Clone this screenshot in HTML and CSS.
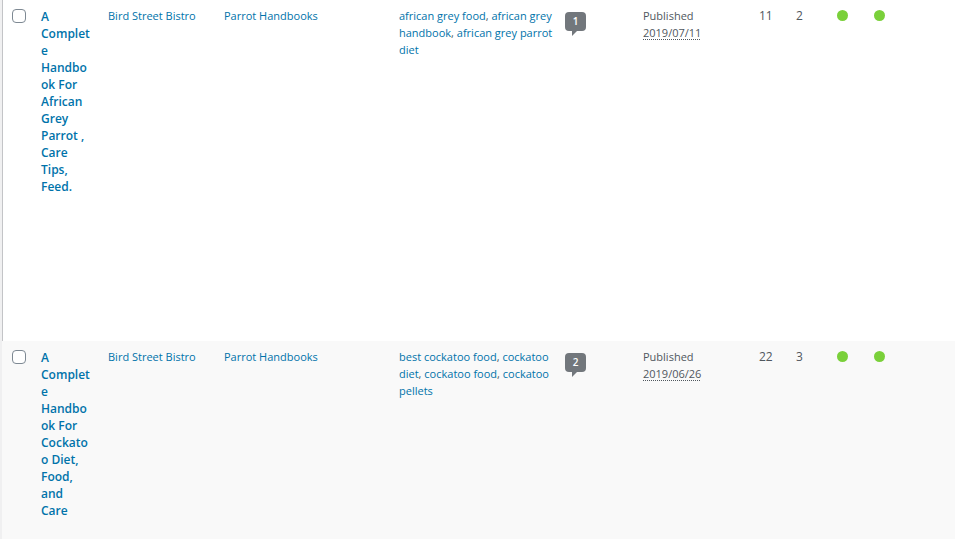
FILE: index.html
```
<!DOCTYPE html>
<html lang="en">
<head>
    <meta charset="UTF-8">
    <meta name="viewport" content="width=device-width, initial-scale=1.0">
    <title>Posts</title>
    <link rel="stylesheet" href="styles.css">
</head>
<body>

    <table class="posts">
        <colgroup>
            <col class="col-check">
            <col class="col-title">
            <col class="col-author">
            <col class="col-categories">
            <col class="col-tags">
            <col class="col-comments">
            <col class="col-date">
            <col class="col-links">
            <col class="col-linked">
            <col class="col-seo">
            <col class="col-readability">
        </colgroup>
        <tbody>
            <tr class="post-tall">
                <td class="check"><input type="checkbox" id="post-1" aria-label="Select A Complete Handbook For African Grey Parrot"></td>
                <td class="title"><a href="#">A Complete Handbook For African Grey Parrot , Care Tips, Feed.</a></td>
                <td><a href="#">Bird Street Bistro</a></td>
                <td><a href="#">Parrot Handbooks</a></td>
                <td><a href="#">african grey food</a>, <a href="#">african grey handbook</a>, <a href="#">african grey parrot diet</a></td>
                <td class="comments"><a href="#" class="bubble">1</a></td>
                <td>Published<br><abbr title="2019/07/11">2019/07/11</abbr></td>
                <td class="count">11</td>
                <td class="count">2</td>
                <td><span class="score" title="SEO: good"></span></td>
                <td><span class="score" title="Readability: good"></span></td>
            </tr>
            <tr>
                <td class="check"><input type="checkbox" id="post-2" aria-label="Select A Complete Handbook For Cockatoo Diet, Food, and Care"></td>
                <td class="title"><a href="#">A Complete Handbook For Cockatoo Diet, Food, and Care</a></td>
                <td><a href="#">Bird Street Bistro</a></td>
                <td><a href="#">Parrot Handbooks</a></td>
                <td><a href="#">best cockatoo food</a>, <a href="#">cockatoo diet</a>, <a href="#">cockatoo food</a>, <a href="#">cockatoo pellets</a></td>
                <td class="comments"><a href="#" class="bubble">2</a></td>
                <td>Published<br><abbr title="2019/06/26">2019/06/26</abbr></td>
                <td class="count">22</td>
                <td class="count">3</td>
                <td><span class="score" title="SEO: good"></span></td>
                <td><span class="score" title="Readability: good"></span></td>
            </tr>
        </tbody>
    </table>

</body>
</html>
```

FILE: styles.css
```
body {
    margin: 0;
    padding-left: 2px;
    background-color: #f0f0f1;
    color: #50575e;
    font-family: "Segoe UI", "Open Sans", sans-serif;
    font-size: 11px;
    line-height: 17px;
}

a {
    color: #0073aa;
    text-decoration: none;
}

a:hover {
    color: #00a0d2;
}

.posts {
    width: 100%;
    height: 100vh;
    table-layout: fixed;
    border-spacing: 0;
    background-color: #fff;
}

.posts tr:nth-child(even) {
    background-color: #f9f9f9;
}

.posts td {
    padding: 7px 0 8px 10px;
    vertical-align: top;
    overflow-wrap: break-word;
}

.post-tall {
    height: 341px;
}

.col-check { width: 29px; }
.col-title { width: 67px; }
.col-author { width: 116px; }
.col-categories { width: 175px; }
.col-tags { width: 166px; }
.col-comments { width: 78px; }
.col-date { width: 116px; }
.col-links { width: 37px; }
.col-linked { width: 41px; }
.col-seo { width: 37px; }

.posts .check {
    border-left: 1px solid #f9f9f9;
    padding-left: 9px;
}

.post-tall .check {
    border-left-color: #c3c4c7;
}

.check input {
    display: block;
    appearance: none;
    box-sizing: border-box;
    width: 14px;
    height: 14px;
    margin: 2px 0;
    border: 1px solid #7e8993;
    border-radius: 4px;
    background-color: #fff;
}

.check input:checked {
    background-color: #0073aa;
}

.posts .title {
    padding-top: 8px;
    padding-right: 6px;
    font-size: 12px;
    font-weight: 600;
}

.count {
    font-size: 12px;
}

abbr {
    text-decoration: underline dotted 1px;
    text-underline-offset: 2px;
}

.posts .comments {
    padding: 12px 0 8px 10px;
}

.bubble {
    display: block;
    position: relative;
    width: 21px;
    height: 19px;
    border-radius: 4px;
    background-color: #72777c;
    color: #fff;
    font-size: 10px;
    font-weight: 600;
    line-height: 19px;
    text-align: center;
}

.bubble:hover {
    color: #fff;
    background-color: #0073aa;
}

/* tail of the comment bubble */
.bubble::after {
    content: "";
    position: absolute;
    top: 19px;
    left: 7px;
    border-top: 5px solid #72777c;
    border-right: 5px solid transparent;
}

.score {
    display: block;
    width: 11px;
    height: 11px;
    margin-top: 3px;
    border-radius: 50%;
    background-color: #7ad03a;
}
```
